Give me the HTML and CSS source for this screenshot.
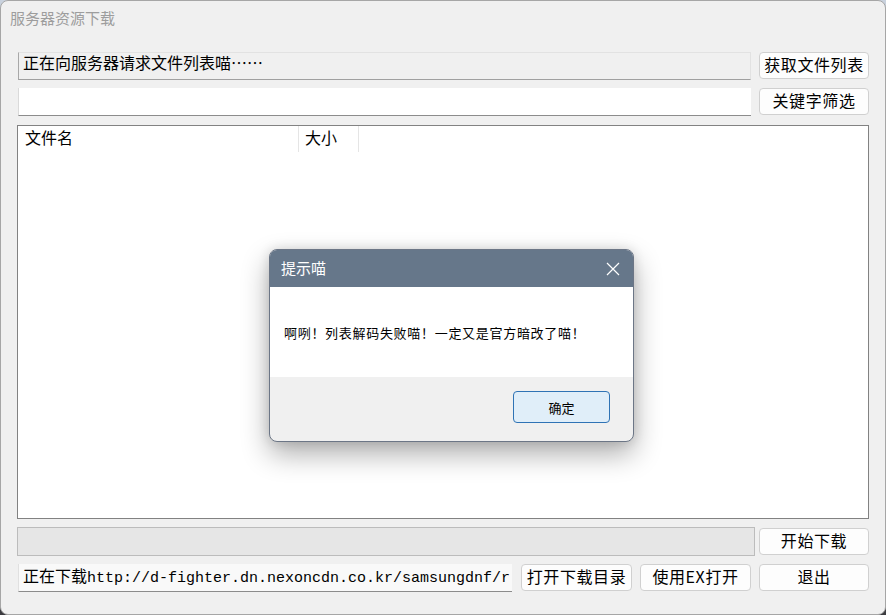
FILE: index.html
```html
<!DOCTYPE html>
<html lang="zh-CN">
<head>
<meta charset="utf-8">
<title>服务器资源下载</title>
<link rel="stylesheet" href="styles.css">
</head>
<body>
<div class="window">
  <div class="titlebar">服务器资源下载</div>
  <div class="content">
    <div class="label">正在向服务器请求文件列表喵……</div>
    <button class="btn">获取文件列表</button>
    <div class="input"></div>
    <button class="btn">关键字筛选</button>
    <div class="list">
      <div class="list-head">
        <div class="col col-name">文件名</div>
        <div class="col col-size">大小</div>
      </div>
    </div>
    <div class="progress"></div>
    <button class="btn">开始下载</button>
    <div class="bottom-left">
      <div class="status">正在下载<span class="mono">http://d-fighter.dn.nexoncdn.co.kr/samsungdnf/r</span></div>
      <button class="btn btn-wide">打开下载目录</button>
      <button class="btn btn-wide">使用EX打开</button>
    </div>
    <button class="btn">退出</button>
  </div>

  <div class="dialog">
    <div class="dlg-title">
      <span>提示喵</span>
      <svg class="dlg-close" width="14" height="14" viewBox="0 0 14 14"><path d="M1 1 L13 13 M13 1 L1 13" stroke="#fff" stroke-width="1.2" fill="none"/></svg>
    </div>
    <div class="dlg-body">啊咧！列表解码失败喵！一定又是官方暗改了喵！</div>
    <div class="dlg-foot"><button class="dlg-btn">确定</button></div>
  </div>
</div>
</body>
</html>
```

FILE: styles.css
```css
html, body {
  margin: 0;
  padding: 0;
}
body {
  width: 886px;
  height: 615px;
  overflow: hidden;
  background: linear-gradient(180deg, #c9d2de 0%, #8a8f98 60%, #3b3b3f 100%);
  font-family: "Noto Sans CJK SC", "Noto Sans", sans-serif;
}
.window {
  position: relative;
  width: 884px;
  height: 613px;
  background: #f0f0f0;
  border: 1px solid #a6a6a6;
  border-radius: 8px;
  overflow: hidden;
}
.titlebar {
  height: 37px;
  line-height: 34px;
  padding-left: 9px;
  font-size: 15px;
  color: #9d9d9d;
}
.content {
  display: grid;
  grid-template-columns: 1fr 110px;
  grid-template-rows: 28px 28px 395px 29px 28px;
  column-gap: 8px;
  row-gap: 8px;
  padding: 14px 16px 0 16px;
}
.label {
  margin-left: 1px;
  box-sizing: border-box;
  border-top: 1px solid #e2e2e2;
  border-right: 1px solid #e2e2e2;
  border-left: 1px solid #a8a8a8;
  border-bottom: 1px solid #a0a0a0;
  background: #f0f0f0;
  font-size: 16px;
  line-height: 18px;
  padding-left: 4px;
  color: #000;
  white-space: nowrap;
}
.input {
  margin-left: 1px;
  box-sizing: border-box;
  background: #fff;
  border-left: 1px solid #dadada;
  border-bottom: 1px solid #8c8c8c;
}
.btn {
  box-sizing: border-box;
  height: 27px;
  margin: 0;
  padding: 0 0 3px 0;
  background: #fdfdfd;
  border: 1px solid #d0d0d0;
  border-radius: 4px;
  font-family: "Noto Sans CJK SC", sans-serif;
  font-size: 16px;
  line-height: 20px;
  letter-spacing: 0.6px;
  color: #000;
}
.list {
  align-self: end;
  height: 394px;
  grid-column: 1 / 3;
  box-sizing: border-box;
  border: 1px solid #828282;
  background: #fff;
}
.list-head {
  display: flex;
  height: 26px;
}
.col {
  box-sizing: border-box;
  font-size: 16px;
  line-height: 22px;
  padding-left: 7px;
  border-right: 1px solid #e5e5e5;
}
.col-name { width: 281px; }
.col-size { width: 60px; padding-left: 6px; }
.progress {
  box-sizing: border-box;
  background: #e6e6e6;
  border: 1px solid #bcbcbc;
  margin-right: -4px;
}
.progress + .btn {
  align-self: center;
  height: 27px;
}
.bottom-left {
  display: flex;
  gap: 8px;
  align-items: start;
}
.status {
  flex: 1;
  min-width: 0;
  box-sizing: border-box;
  height: 28px;
  margin-left: 1px;
  margin-right: 1px;
  background: #f9f9f9;
  border-left: 1px solid #e0e0e0;
  border-bottom: 1px solid #8c8c8c;
  font-size: 16px;
  line-height: 23px;
  padding-left: 4px;
  white-space: nowrap;
  overflow: hidden;
  color: #000;
}
.mono {
  font-family: "Liberation Mono", "DejaVu Sans Mono", monospace;
  font-size: 15px;
}
.btn-wide {
  width: 111px;
  height: 27px;
}
.dialog {
  position: absolute;
  left: 268px;
  top: 248px;
  width: 365px;
  height: 193px;
  box-sizing: border-box;
  border: 1px solid #6c7686;
  border-radius: 8px;
  overflow: hidden;
  background: #f0f0f0;
  box-shadow: 0 12px 28px rgba(0, 0, 0, 0.32), 0 0 12px rgba(0, 0, 0, 0.12);
  display: flex;
  flex-direction: column;
}
.dlg-title {
  height: 37px;
  background: #66778a;
  color: #fff;
  font-size: 15px;
  display: flex;
  align-items: center;
  justify-content: space-between;
  padding: 0 13px 2px 11px;
  box-sizing: border-box;
}
.dlg-close {
  display: block;
  margin-top: 2px;
}
.dlg-body {
  height: 90px;
  background: #fff;
  display: flex;
  align-items: center;
  padding-left: 14px;
  font-size: 13px;
  letter-spacing: 0.7px;
  color: #000;
}
.dlg-foot {
  flex: 1;
  display: flex;
  justify-content: flex-end;
  align-items: flex-start;
  padding: 14px 23px 0 0;
}
.dlg-btn {
  width: 97px;
  height: 32px;
  box-sizing: border-box;
  background: #e0eef9;
  border: 1px solid #2f73b5;
  border-radius: 4px;
  font-family: "Noto Sans CJK SC", sans-serif;
  font-size: 13px;
  color: #000;
  padding: 0;
}
```
